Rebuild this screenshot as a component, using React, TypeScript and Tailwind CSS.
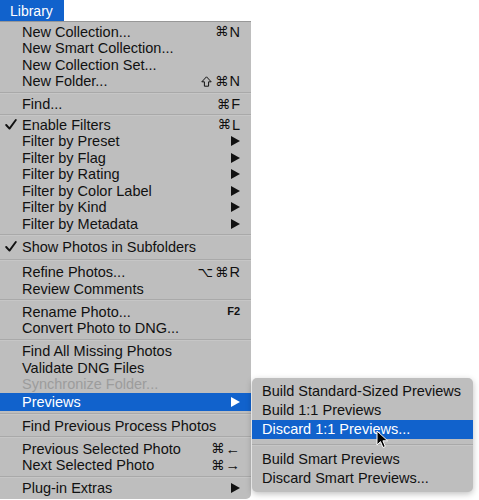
import React from 'react';

type Entry =
    | { sep: true; h?: string }
    | {
          sep?: false;
          label: string;
          shortcut?: React.ReactNode;
          check?: boolean;
          arrow?: boolean;
          disabled?: boolean;
          active?: boolean;
      };

const Arrow = ({ white }: { white?: boolean }) => (
    <svg width="9" height="10" viewBox="0 0 9 10" className="shrink-0">
        <polygon points="0,0 9,5 0,10" fill={white ? '#ffffff' : '#111111'} />
    </svg>
);

const Check = () => (
    <svg width="12" height="11" viewBox="0 0 12 11">
        <polyline points="1.2,6 4.5,9.6 10.8,1" fill="none" stroke="#111111" strokeWidth="1.9" strokeLinecap="round" strokeLinejoin="round" />
    </svg>
);

const Shift = () => (
    <svg width="11" height="11" viewBox="0 0 11 11" className="shrink-0">
        <path d="M5.5 0.8 L10.2 5.8 L7.6 5.8 L7.6 10.2 L3.4 10.2 L3.4 5.8 L0.8 5.8 Z" fill="none" stroke="#111111" strokeWidth="1" strokeLinejoin="round" />
    </svg>
);

const Cmd = ({ k }: { k: React.ReactNode }) => (
    <span className="flex items-center gap-[1px]">
        <span className="font-['DejaVu_Sans'] text-[13.5px]">⌘</span>
        <span>{k}</span>
    </span>
);

const menu: Entry[] = [
    { label: 'New Collection...', shortcut: <Cmd k="N" /> },
    { label: 'New Smart Collection...' },
    { label: 'New Collection Set...' },
    {
        label: 'New Folder...',
        shortcut: (
            <span className="flex items-center gap-[3px]">
                <Shift />
                <Cmd k="N" />
            </span>
        ),
    },
    { sep: true },
    { label: 'Find...', shortcut: <Cmd k="F" /> },
    { sep: true, h: 'h-[4px]' },
    { label: 'Enable Filters', check: true, shortcut: <Cmd k="L" /> },
    { label: 'Filter by Preset', arrow: true },
    { label: 'Filter by Flag', arrow: true },
    { label: 'Filter by Rating', arrow: true },
    { label: 'Filter by Color Label', arrow: true },
    { label: 'Filter by Kind', arrow: true },
    { label: 'Filter by Metadata', arrow: true },
    { sep: true },
    { label: 'Show Photos in Subfolders', check: true },
    { sep: true, h: 'h-[9px]' },
    {
        label: 'Refine Photos...',
        shortcut: (
            <span className="flex items-center gap-[2px]">
                <span className="font-['DejaVu_Sans'] text-[13.5px]">⌥</span>
                <Cmd k="R" />
            </span>
        ),
    },
    { label: 'Review Comments' },
    { sep: true },
    { label: 'Rename Photo...', shortcut: <span className="text-[11px] font-bold">F2</span> },
    { label: 'Convert Photo to DNG...' },
    { sep: true },
    { label: 'Find All Missing Photos' },
    { label: 'Validate DNG Files' },
    { label: 'Synchronize Folder...', disabled: true },
    { label: 'Previews', arrow: true, active: true },
    { sep: true },
    { label: 'Find Previous Process Photos' },
    { sep: true },
    { label: 'Previous Selected Photo', shortcut: <Cmd k="←" /> },
    { label: 'Next Selected Photo', shortcut: <Cmd k="→" /> },
    { sep: true },
    { label: 'Plug-in Extras', arrow: true },
];

const sub: Entry[] = [
    { label: 'Build Standard-Sized Previews' },
    { label: 'Build 1:1 Previews' },
    { label: 'Discard 1:1 Previews...', active: true },
    { sep: true },
    { label: 'Build Smart Previews' },
    { label: 'Discard Smart Previews...' },
];

const Separator = ({ className }: { className: string }) => (
    <div className={`flex flex-col justify-center ${className}`}>
        <div className="h-px bg-[#a9a9a9]" />
        <div className="h-px bg-[#c6c6c6]" />
    </div>
);

const MenuRow = ({ item }: { item: Exclude<Entry, { sep: true }> }) => (
    <div
        className={`flex items-center pr-[11px] ${item.active ? 'h-[18.5px] bg-[#1162cc] text-white' : 'h-[16.5px]'} ${
            item.disabled ? 'text-[#9c9c9c]' : ''
        }`}
    >
        <span className="w-[22px] pl-[5px] flex items-center">{item.check && <Check />}</span>
        <span className="flex-1 whitespace-nowrap">{item.label}</span>
        {item.shortcut}
        {item.arrow && <Arrow white={item.active} />}
    </div>
);

export default function App() {
    return (
        <div className="relative w-[479px] h-[500px] bg-white overflow-hidden font-['Liberation_Sans','DejaVu_Sans',sans-serif] text-[14.5px] leading-none text-[#111111]">
            {/* Menu bar title */}
            <div className="w-[64px] h-[21px] bg-[#1162cc] text-white text-[14px] flex items-center pl-[10px]">Library</div>

            {/* Main menu */}
            <div className="w-[251px] bg-[#bebebe] border-t border-[#979797] rounded-br-[5px] pt-[1.5px] pb-[2px] flex flex-col">
                {menu.map((item, i) =>
                    item.sep ? (
                        <Separator key={i} className={item.h ?? 'h-[6.5px]'} />
                    ) : (
                        <MenuRow key={i} item={item} />
                    )
                )}
            </div>

            {/* Previews submenu */}
            <div className="absolute left-[252px] top-[378px] w-[221px] bg-[#bebebe] rounded-[5px] pt-[4px] pb-[4px] flex flex-col shadow-[0_2px_6px_rgba(0,0,0,0.25)]">
                {sub.map((item, i) =>
                    item.sep ? (
                        <Separator key={i} className="h-[11px]" />
                    ) : (
                        <div
                            key={i}
                            className={`h-[19px] flex items-center pl-[10px] whitespace-nowrap ${
                                item.active ? 'bg-[#1162cc] text-white' : ''
                            }`}
                        >
                            {item.label}
                        </div>
                    )
                )}
            </div>

            {/* Mouse pointer */}
            <svg className="absolute left-[376px] top-[430px]" width="13" height="19" viewBox="0 0 13 19">
                <path
                    d="M1 1 L1 15 L4.5 11.6 L7 17.5 L9.3 16.5 L6.9 10.8 L11.6 10.8 Z"
                    fill="#000000"
                    stroke="#ffffff"
                    strokeWidth="1"
                    strokeLinejoin="round"
                />
            </svg>
        </div>
    );
}
